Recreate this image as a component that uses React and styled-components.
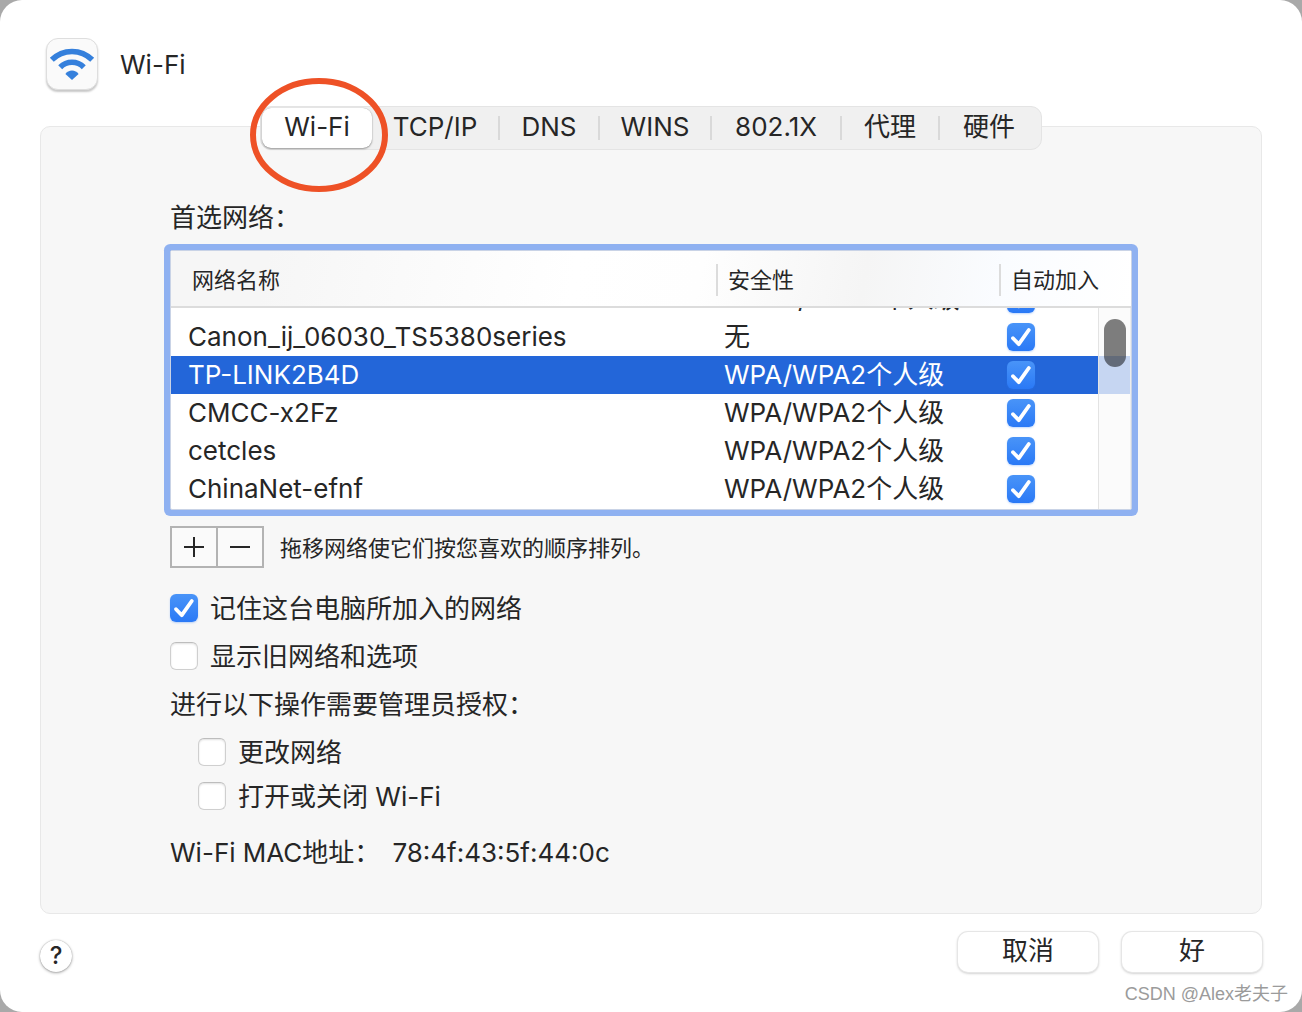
import React, { useLayoutEffect, useRef, useState } from 'react';
import styled, { createGlobalStyle } from 'styled-components';

const GlobalStyle = createGlobalStyle`
  * {
    box-sizing: border-box;
  }
  body {
    margin: 0;
    background-color: #a9a9a9;
    color: #262626;
    font-family: Inter, 'Noto Sans CJK SC', sans-serif;
    font-size: 26px;
    line-height: 36px;
  }
  button,
  input {
    margin: 0;
    padding: 0;
    border: none;
    font: inherit;
    color: inherit;
  }
`;

const Window = styled.div`
  position: relative;
  display: flex;
  flex-direction: column;
  min-height: 100vh;
  padding: 38px 40px 40px;
  border-radius: 22px;
  background-color: #fff;
`;

const Header = styled.header`
  display: flex;
  align-items: center;
  gap: 22px;
  padding-left: 6px;
  & h1 {
    margin: 0;
    padding-top: 2px;
    font-size: 26px;
    font-weight: 400;
  }
`;

const AppIcon = styled.div`
  display: grid;
  place-items: center;
  width: 52px;
  height: 52px;
  border: 1px solid #dedede;
  border-radius: 12px;
  background-color: #fafafa;
  box-shadow: 0 2px 2px rgba(0, 0, 0, 0.22);
`;

const Panel = styled.main`
  display: flex;
  flex-direction: column;
  flex: 1;
  margin-top: 36px;
  padding: 0 129px 40px;
  border: 1px solid #e8e8e8;
  border-radius: 10px;
  background-color: #f7f7f7;
`;

const TabBar = styled.nav`
  position: relative;
  display: flex;
  align-self: center;
  height: 44px;
  margin-top: -21px;
  padding: 1px 3px 1px 1px;
  border: 1px solid #e4e4e4;
  border-radius: 11px;
  background-color: #f0f0f0;
`;

const Tab = styled.button`
  width: ${({ $width }) => $width}px;
  padding-bottom: 2px;
  border-radius: 9px;
  background-color: ${({ $active }) => ($active ? '#fff' : 'transparent')};
  box-shadow: ${({ $active }) =>
    $active ? '0 0 1px rgba(0, 0, 0, 0.3), 0 1px 2px rgba(0, 0, 0, 0.35)' : 'none'};
`;

const Divider = styled.span`
  width: 2px;
  height: 24px;
  align-self: center;
  background-color: #d9d9d9;
`;

const Marker = styled.svg`
  position: absolute;
  top: -30px;
  left: -12px;
  pointer-events: none;
`;

const Caption = styled.p`
  margin: ${({ $top }) => $top}px 0 0;
`;

const TableBox = styled.div`
  position: relative;
  height: 260px;
  margin-top: 14px;
  border: 1px solid #c9d3e6;
  border-radius: 2px;
  background-color: #fff;
  box-shadow: 0 0 0 6px #8fb1f1;
`;

const Table = styled.table`
  display: flex;
  flex-direction: column;
  height: 100%;
  & thead {
    display: block;
  }
  & tbody {
    display: block;
    flex: 1;
    min-height: 0;
    padding-bottom: 20px;
    overflow: hidden;
  }
  & tr {
    display: grid;
    grid-template-columns: 1fr 283px 132px;
    align-items: center;
  }
  & thead tr {
    height: 57px;
    padding-top: 2px;
    border-bottom: 2px solid #dcdcdc;
    background: linear-gradient(100deg, #f6f6f6 10%, #fff 42%, #fefefe 55%, #f5f5f5 72%, #fafcff 86%, #fff);
  }
`;

const Th = styled.th`
  padding: 0 0 0 ${({ $first }) => ($first ? 21 : 10)}px;
  border-left: ${({ $first }) => ($first ? 'none' : '2px solid #dcdcdc')};
  font-size: 22px;
  font-weight: 400;
  line-height: 32px;
  text-align: left;
  white-space: nowrap;
`;

const Row = styled.tr`
  height: 38px;
  background-color: ${({ $selected }) => ($selected ? '#2366d9' : '#fff')};
  color: ${({ $selected }) => ($selected ? '#fff' : '#262626')};
  & td {
    display: flex;
    padding: 0 0 0 8px;
    white-space: nowrap;
  }
  & td:first-child {
    padding-left: 17px;
  }
`;

const ScrollTrack = styled.div`
  position: absolute;
  top: 57px;
  right: 0;
  bottom: 0;
  width: 33px;
  padding: 11px 4px 0 5px;
  border-left: 1px solid #e3e3e3;
  border-right: 1px solid #ededed;
  background-color: rgba(250, 250, 250, 0.76);
`;

const ScrollThumb = styled.div`
  height: 48px;
  border-radius: 11px;
  background-color: rgba(0, 0, 0, 0.5);
`;

const Tick = styled.span`
  display: grid;
  flex: none;
  & > * {
    grid-area: 1 / 1;
  }
  & input {
    appearance: none;
    width: 28px;
    height: 28px;
    border: 1px solid #cfcfcf;
    border-top-color: #bdbdbd;
    border-radius: 6px;
    background-color: #fff;
    box-shadow: inset 0 1px 2px rgba(0, 0, 0, 0.12);
  }
  & input:checked {
    border: none;
    background: linear-gradient(#4994f8, #2a79f6);
    box-shadow: 0 1px 2px rgba(42, 121, 246, 0.3);
  }
  & svg {
    pointer-events: none;
  }
`;

const Tools = styled.div`
  display: flex;
  align-items: center;
  gap: 16px;
  margin-top: 16px;
  font-size: 22px;
  & > span {
    padding-top: 2px;
  }
`;

const ToolGroup = styled.div`
  display: flex;
  border: 2px solid #b3b3b3;
  background-color: #fafafa;
`;

const ToolButton = styled.button`
  display: grid;
  place-items: center;
  width: 44px;
  height: 38px;
  background-color: transparent;
  & + & {
    width: 46px;
    border-left: 2px solid #b3b3b3;
  }
`;

const Option = styled.label`
  display: flex;
  align-items: center;
  gap: 12px;
  margin-top: ${({ $top }) => $top}px;
  margin-left: ${({ $nested }) => ($nested ? 28 : 0)}px;
`;

const OptionText = styled.span`
  padding-top: 2px;
`;

const Address = styled.div`
  display: flex;
  gap: 12px;
  margin-top: 20px;
`;

const Footer = styled.footer`
  display: flex;
  align-items: center;
  gap: 24px;
  margin-top: 18px;
`;

const HelpButton = styled.button`
  width: 32px;
  height: 32px;
  margin: 7px auto 0 0;
  border-radius: 50%;
  background-color: #fff;
  box-shadow: 0 0 1px rgba(0, 0, 0, 0.35), 0 1px 3px rgba(0, 0, 0, 0.35);
  font-size: 24px;
  font-weight: 500;
  line-height: 32px;
`;

const PushButton = styled.button`
  width: 140px;
  height: 40px;
  padding-bottom: 2px;
  border-radius: 10px;
  background-color: #fff;
  box-shadow: 0 0 0 1px #e6e6e6, 0 1px 3px rgba(0, 0, 0, 0.35);
`;

const Watermark = styled.div`
  position: absolute;
  right: 14px;
  bottom: 4px;
  color: #9b9b9b;
  font-family: 'Liberation Sans', 'Noto Sans CJK SC', sans-serif;
  font-size: 18px;
  line-height: 28px;
`;

const TABS = [
  { label: 'Wi-Fi', width: 110 },
  { label: 'TCP/IP', width: 126 },
  { label: 'DNS', width: 98 },
  { label: 'WINS', width: 110 },
  { label: '802.1X', width: 128 },
  { label: '代理', width: 96 },
  { label: '硬件', width: 98 },
];

const NETWORKS = [
  { name: 'HUAWEI-B311-068380-ces', security: 'WPA2/WPA3个人级' },
  { name: 'Canon_ij_06030_TS5380series', security: '无' },
  { name: 'TP-LINK2B4D', security: 'WPA/WPA2个人级' },
  { name: 'CMCC-x2Fz', security: 'WPA/WPA2个人级' },
  { name: 'cetcles', security: 'WPA/WPA2个人级' },
  { name: 'ChinaNet-efnf', security: 'WPA/WPA2个人级' },
];

const WifiIcon = () => (
  <svg width="46" height="34" viewBox="0 0 46 34" fill="none" stroke="#3580dc" strokeWidth="5.6">
    <path d="M2.8 12.8a28.6 28.6 0 0 1 40.4 0" />
    <path d="M11.2 20.2a16.7 16.7 0 0 1 23.6 0" />
    <path d="M23 33l-6.6-6a8 8 0 0 1 13.2 0z" fill="#3580dc" stroke="none" />
  </svg>
);

const Checkbox = ({ defaultChecked = false, ...props }) => {
  const [checked, setChecked] = useState(defaultChecked);
  return (
    <Tick>
      <input type="checkbox" checked={checked} onChange={() => setChecked(!checked)} {...props} />
      {checked && (
        <svg width="28" height="28" viewBox="0 0 28 28" fill="none" stroke="#fff" strokeWidth="3.8">
          <path d="M6 15.2l5.8 6L21.8 7" strokeLinecap="round" strokeLinejoin="round" />
        </svg>
      )}
    </Tick>
  );
};

const NetworkTable = () => {
  const body = useRef(null);

  useLayoutEffect(() => {
    body.current.scrollTop = 28;
  }, []);

  return (
    <TableBox>
      <Table>
        <thead>
          <tr>
            <Th $first>网络名称</Th>
            <Th>安全性</Th>
            <Th>自动加入</Th>
          </tr>
        </thead>
        <tbody ref={body}>
          {NETWORKS.map(({ name, security }) => (
            <Row key={name} $selected={name === 'TP-LINK2B4D'}>
              <td>{name}</td>
              <td>{security}</td>
              <td>
                <Checkbox defaultChecked aria-label={name} />
              </td>
            </Row>
          ))}
        </tbody>
      </Table>
      <ScrollTrack>
        <ScrollThumb />
      </ScrollTrack>
    </TableBox>
  );
};

const App = () => {
  const [tab, setTab] = useState('Wi-Fi');

  return (
    <>
      <GlobalStyle />
      <Window>
        <Header>
          <AppIcon>
            <WifiIcon />
          </AppIcon>
          <h1>Wi-Fi</h1>
        </Header>
        <Panel>
          <TabBar>
            {TABS.map(({ label, width }, i) => (
              <React.Fragment key={label}>
                {i > 1 && <Divider />}
                <Tab type="button" $width={width} $active={tab === label} onClick={() => setTab(label)}>
                  {label}
                </Tab>
              </React.Fragment>
            ))}
            <Marker width="140" height="116" viewBox="0 0 140 116" fill="none">
              <ellipse cx="70" cy="58" rx="66" ry="54" stroke="#ee5126" strokeWidth="6" />
            </Marker>
          </TabBar>
          <Caption $top={50}>首选网络：</Caption>
          <NetworkTable />
          <Tools>
            <ToolGroup>
              <ToolButton type="button" aria-label="添加">
                <svg width="22" height="22" stroke="#262626" strokeWidth="2">
                  <path d="M11 1v20M1 11h20" />
                </svg>
              </ToolButton>
              <ToolButton type="button" aria-label="移除">
                <svg width="22" height="22" stroke="#262626" strokeWidth="2">
                  <path d="M1 11h20" />
                </svg>
              </ToolButton>
            </ToolGroup>
            <span>拖移网络使它们按您喜欢的顺序排列。</span>
          </Tools>
          <Option $top={21}>
            <Checkbox defaultChecked />
            <OptionText>记住这台电脑所加入的网络</OptionText>
          </Option>
          <Option $top={10}>
            <Checkbox />
            <OptionText>显示旧网络和选项</OptionText>
          </Option>
          <Caption $top={12}>进行以下操作需要管理员授权：</Caption>
          <Option $top={10} $nested>
            <Checkbox />
            <OptionText>更改网络</OptionText>
          </Option>
          <Option $top={6} $nested>
            <Checkbox />
            <OptionText>打开或关闭 Wi-Fi</OptionText>
          </Option>
          <Address>
            <span>Wi-Fi MAC地址：</span>
            <span>78:4f:43:5f:44:0c</span>
          </Address>
        </Panel>
        <Footer>
          <HelpButton type="button">?</HelpButton>
          <PushButton type="button">取消</PushButton>
          <PushButton type="button">好</PushButton>
        </Footer>
        <Watermark>CSDN @Alex老夫子</Watermark>
      </Window>
    </>
  );
};

export default App;
